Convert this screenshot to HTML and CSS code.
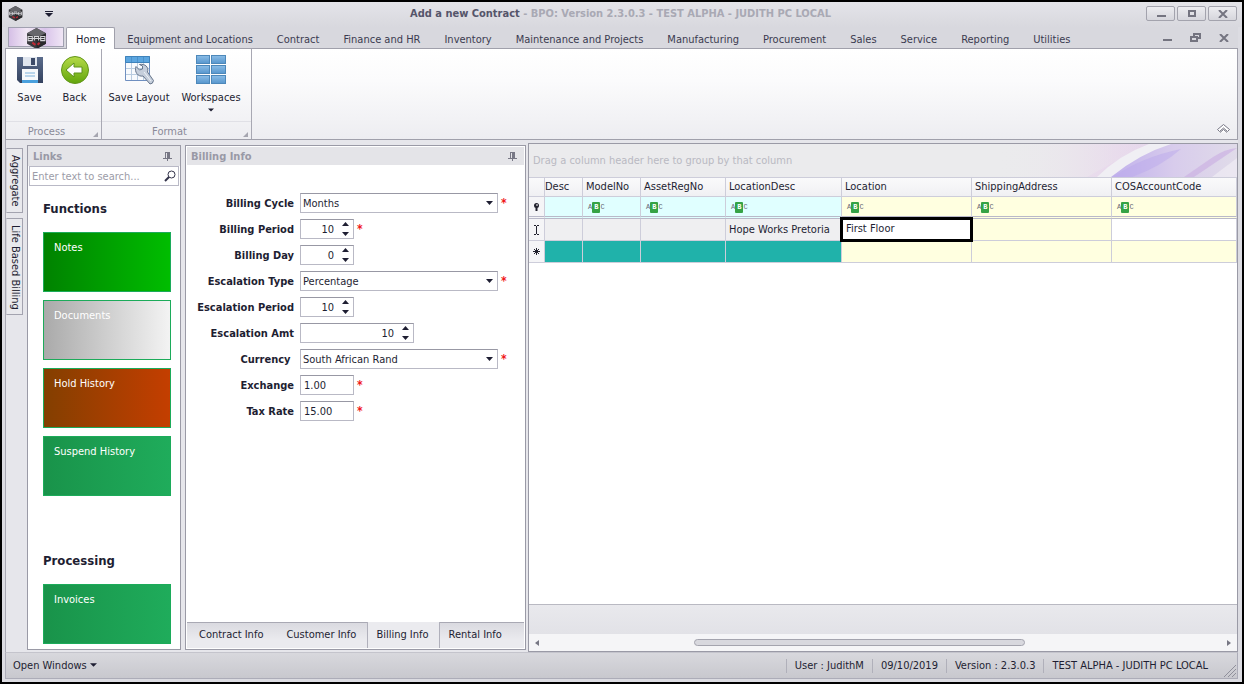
FILE: index.html
```html
<!DOCTYPE html>
<html lang="en">
<head>
    <meta charset="UTF-8">
    <meta name="viewport" content="width=device-width, initial-scale=1.0">
    <title>Add a new Contract - BPO</title>
    <link rel="stylesheet" href="styles.css">
</head>
<body>
    <!-- Shared icons -->
    <svg class="symbols" aria-hidden="true">
        <symbol id="icon-logo" viewBox="0 0 20 20">
            <path d="M10 0 L19 5 V15 L10 20 L1 15 V5 Z" fill="#3a3a3e"/>
            <path d="M10 0 L19 5 L10 9 L1 5 Z" fill="#66666b"/>
            <path d="M10 10 L19 5 V15 L10 20 Z" fill="#29292c"/>
            <path d="M2 8 H6 V12 H2 Z M8 12 V8 H12 V12 M14 8 H18 V12 H14 Z M2 10 H18" fill="none" stroke="#d4d4d8"/>
            <path d="M6 14 l3 2 M11 16 l2 -2" stroke="#c02a35" stroke-width="2"/>
        </symbol>
        <symbol id="icon-pin" viewBox="0 0 9 9">
            <path d="M2 0.5 H7 M2.5 0 V6 M0 6.5 H9 M4.5 7 V9" fill="none" stroke="#777785"/>
            <path d="M4 0 H7 V6 H4 Z" fill="#777785"/>
        </symbol>
        <symbol id="icon-down" viewBox="0 0 8 4">
            <path d="M0 0 H8 L4 4 Z" fill="#1e1e32"/>
        </symbol>
        <symbol id="icon-launcher" viewBox="0 0 5 5">
            <path d="M5 0 V5 H0 Z" fill="#a6a6b0"/>
        </symbol>
        <symbol id="icon-close" viewBox="0 0 10 8">
            <path d="M1 0 L9 8 M9 0 L1 8" fill="none" stroke="#747480" stroke-width="2"/>
        </symbol>
        <symbol id="icon-minimize" viewBox="0 0 10 8">
            <path d="M1 6 H10" stroke="#747480" stroke-width="2"/>
        </symbol>
    </svg>

    <header class="titlebar">
        <svg class="app-icon"><use href="#icon-logo"/></svg>
        <button class="quick-menu" aria-label="Customize toolbar">
            <svg width="8" height="6" viewBox="0 0 8 6"><path d="M0 0 H8 V1 H0 Z M0 2 H8 L4 6 Z" fill="#1e1e32"/></svg>
        </button>
        <h1 class="title">Add a new Contract <span>- BPO: Version 2.3.0.3 - TEST ALPHA - JUDITH PC LOCAL</span></h1>
        <div class="window-buttons">
            <button aria-label="Minimize"><svg width="10" height="8"><use href="#icon-minimize"/></svg></button>
            <button aria-label="Maximize"><svg width="10" height="8" viewBox="0 0 10 8"><path d="M2 1 H8 V6 H2 Z" fill="none" stroke="#747480" stroke-width="2"/></svg></button>
            <button aria-label="Close"><svg width="10" height="8"><use href="#icon-close"/></svg></button>
        </div>
    </header>

    <nav class="ribbon-tabs">
        <button class="app-button" aria-label="Application menu"><svg width="21" height="21"><use href="#icon-logo"/></svg></button>
        <a class="tab active" href="#">Home</a>
        <a class="tab" href="#">Equipment and Locations</a>
        <a class="tab" href="#">Contract</a>
        <a class="tab" href="#">Finance and HR</a>
        <a class="tab" href="#">Inventory</a>
        <a class="tab" href="#">Maintenance and Projects</a>
        <a class="tab" href="#">Manufacturing</a>
        <a class="tab" href="#">Procurement</a>
        <a class="tab" href="#">Sales</a>
        <a class="tab" href="#">Service</a>
        <a class="tab" href="#">Reporting</a>
        <a class="tab" href="#">Utilities</a>
        <div class="child-buttons">
            <button aria-label="Minimize document"><svg width="10" height="8"><use href="#icon-minimize"/></svg></button>
            <button aria-label="Restore document"><svg width="11" height="9" viewBox="0 0 11 9"><path d="M4 3 V1 H10 V5 H8" fill="none" stroke="#747480" stroke-width="2"/><path d="M1 4 H7 V8 H1 Z" fill="none" stroke="#747480" stroke-width="2"/></svg></button>
            <button aria-label="Close document"><svg width="10" height="8"><use href="#icon-close"/></svg></button>
        </div>
    </nav>

    <section class="ribbon">
        <div class="ribbon-group">
            <div class="ribbon-items">
                <button class="ribbon-button">
                    <svg width="28" height="30" viewBox="0 0 28 30">
                        <defs><linearGradient id="disk" x2="0" y2="1"><stop offset="0" stop-color="#5b6c8c"/><stop offset="1" stop-color="#34425f"/></linearGradient></defs>
                        <path d="M1 2 H27 V28 H4 L1 25 Z" fill="url(#disk)"/>
                        <path d="M7 2 H21 V11 H7 Z" fill="#dfe5ee"/>
                        <path d="M15 3 H19 V10 H15 Z" fill="#3c4a68"/>
                        <path d="M6 14 H22 V28 H6 Z" fill="#f7f9fc"/>
                        <path d="M6 25 H22 V28 H6 Z" fill="#4aa0dd"/>
                        <path d="M9 18 H19 M9 21 H19" stroke="#7db2dc"/>
                    </svg>
                    Save
                </button>
                <button class="ribbon-button">
                    <svg width="28" height="30" viewBox="0 0 28 30">
                        <defs><linearGradient id="ball" x2="0" y2="1"><stop offset="0" stop-color="#b5da48"/><stop offset="1" stop-color="#62a50c"/></linearGradient></defs>
                        <circle cx="14" cy="15" r="13.5" fill="url(#ball)" stroke="#62961a"/>
                        <path d="M5 15 L13 8 V12 H21 V18 H13 V22 Z" fill="#fff" stroke="#5d921b"/>
                    </svg>
                    Back
                </button>
            </div>
            <div class="group-label">Process<svg class="launcher"><use href="#icon-launcher"/></svg></div>
        </div>
        <div class="ribbon-group">
            <div class="ribbon-items">
                <button class="ribbon-button large">
                    <svg width="30" height="30" viewBox="0 0 30 30">
                        <path d="M1.5 1.5 H25.5 V25.5 H1.5 Z" fill="#f8fafd" stroke="#6f8fc0"/>
                        <path d="M1.5 1.5 H25.5 V7.5 H1.5 Z" fill="#5ba5df" stroke="#3f83bb"/>
                        <path d="M2 13.5 H25 M2 19.5 H25 M7.5 8 V25 M13.5 8 V25 M19.5 8 V25" stroke="#b9cce0"/>
                        <path d="M7.5 2 V7 M13.5 2 V7 M19.5 2 V7" stroke="#4a91cb"/>
                        <path d="M12 11.5 L15.5 15 L18.5 14 L18.5 11 L15.5 9.5 C21 8.5 25 12 23.5 17 L29.5 25.5 Q29 29 26 29 L19 21 C14 22 10 17 12 11.5 Z" fill="#c5cedb" stroke="#67758b"/>
                        <path d="M20 17 L27 26" stroke="#eef2f7"/>
                    </svg>
                    Save Layout
                </button>
                <button class="ribbon-button large">
                    <svg width="30" height="30" viewBox="0 0 30 30">
                        <defs><linearGradient id="pane" x2="0" y2="1"><stop offset="0" stop-color="#8bbde7"/><stop offset="1" stop-color="#5796cd"/></linearGradient></defs>
                        <g fill="url(#pane)" stroke="#4d88ba">
                            <rect x="0.5" y="0.5" width="13" height="8"/><rect x="15.5" y="0.5" width="14" height="8"/>
                            <rect x="0.5" y="10.5" width="13" height="8"/><rect x="15.5" y="10.5" width="14" height="8"/>
                            <rect x="0.5" y="20.5" width="13" height="8"/><rect x="15.5" y="20.5" width="14" height="8"/>
                        </g>
                    </svg>
                    Workspaces
                    <svg class="arrow" width="6" height="4"><use href="#icon-down"/></svg>
                </button>
            </div>
            <div class="group-label">Format<svg class="launcher"><use href="#icon-launcher"/></svg></div>
        </div>
        <button class="collapse" aria-label="Collapse ribbon">
            <svg width="13" height="10" viewBox="0 0 13 10"><path d="M0.5 5.5 L6.5 0.5 L12.5 5.5 L10.5 7.5 L6.5 4 L2.5 7.5 Z M3 8.5 L6.5 5.5 L10 8.5" fill="#fff" stroke="#777784"/></svg>
        </button>
    </section>

    <main class="workspace">
        <div class="side-tabs">
            <button>Aggregate</button>
            <button>Life Based Billing</button>
        </div>

        <aside class="panel links">
            <h2 class="panel-title">Links <svg width="9" height="9"><use href="#icon-pin"/></svg></h2>
            <div class="search">
                <input type="text" placeholder="Enter text to search..." aria-label="Search links">
                <button aria-label="Search"><svg width="12" height="12" viewBox="0 0 12 12"><circle cx="7.5" cy="4.5" r="3.5" fill="none" stroke="#33334a"/><path d="M5 7 L1 11" stroke="#33334a" stroke-width="2"/></svg></button>
            </div>
            <div class="link-list">
                <h3>Functions</h3>
                <button class="tile notes">Notes</button>
                <button class="tile documents">Documents</button>
                <button class="tile hold">Hold History</button>
                <button class="tile">Suspend History</button>
                <h3 class="processing">Processing</h3>
                <button class="tile">Invoices</button>
            </div>
        </aside>

        <section class="panel billing">
            <h2 class="panel-title">Billing Info <svg width="9" height="9"><use href="#icon-pin"/></svg></h2>
            <form class="billing-form">
                <label for="cycle">Billing Cycle</label>
                <div class="field required"><select id="cycle" class="wide"><option>Months</option></select></div>
                <label for="period">Billing Period</label>
                <div class="field required"><input id="period" class="small" type="number" value="10"></div>
                <label for="day">Billing Day</label>
                <div class="field"><input id="day" class="small" type="number" value="0"></div>
                <label for="esc-type">Escalation Type</label>
                <div class="field required"><select id="esc-type" class="wide"><option>Percentage</option></select></div>
                <label for="esc-period">Escalation Period</label>
                <div class="field"><input id="esc-period" class="small" type="number" value="10"></div>
                <label for="esc-amt">Escalation Amt</label>
                <div class="field"><input id="esc-amt" class="medium" type="number" value="10"></div>
                <label for="currency">Currency&nbsp;</label>
                <div class="field required"><select id="currency" class="wide"><option>South African Rand</option></select></div>
                <label for="exchange">Exchange</label>
                <div class="field required"><input id="exchange" class="small" type="text" value="1.00"></div>
                <label for="tax">Tax Rate</label>
                <div class="field required"><input id="tax" class="small" type="text" value="15.00"></div>
            </form>
            <div class="bottom-tabs">
                <button>Contract Info</button>
                <button>Customer Info</button>
                <button class="active">Billing Info</button>
                <button class="last">Rental Info</button>
            </div>
        </section>

        <section class="grid">
            <div class="group-panel">
                <span>Drag a column header here to group by that column</span>
                <svg width="240" height="33" viewBox="0 0 240 33">
                    <defs>
                        <linearGradient id="haze"><stop offset="0" stop-color="#ebebed"/><stop offset="0.5" stop-color="#e8d8ec"/><stop offset="1" stop-color="#e0d6ea"/></linearGradient>
                        <linearGradient id="veil"><stop offset="0" stop-color="#ebebed"/><stop offset="1" stop-color="#ebebed" stop-opacity="0"/></linearGradient>
                        <linearGradient id="petal"><stop offset="0" stop-color="#c0b0ec"/><stop offset="0.5" stop-color="#d8ccec"/><stop offset="1" stop-color="#e0dbe9"/></linearGradient>
                    </defs>
                    <rect width="240" height="33" fill="url(#haze)"/>
                    <path d="M0 0 H150 L90 33 H0 Z" fill="url(#veil)"/>
                    <path d="M152 0 H176 Q146 11 121 33 H100 Q122 11 152 0 Z" fill="#f0eff4"/>
                    <path d="M174 0 H240 V33 H114 Q142 10 174 0 Z" fill="url(#petal)"/>
                    <path d="M116 33 Q145 13 184 5 Q165 22 135 33 Z" fill="#bba9eb" opacity="0.5"/>
                    <path d="M187 33 L216 13 Q228 5 240 4 L197 33 Z" fill="#ccb2e3" opacity="0.7"/>
                    <path d="M215 33 L240 14 V33 Z" fill="#efedf4" opacity="0.7"/>
                </svg>
            </div>
            <table>
                <colgroup>
                    <col class="c-indicator"><col class="c-desc"><col class="c-model"><col class="c-asset"><col class="c-locdesc"><col class="c-location"><col class="c-shipping"><col>
                </colgroup>
                <thead>
                    <tr>
                        <th></th>
                        <th class="cut">Desc</th>
                        <th>ModelNo</th>
                        <th>AssetRegNo</th>
                        <th>LocationDesc</th>
                        <th>Location</th>
                        <th>ShippingAddress</th>
                        <th>COSAccountCode</th>
                    </tr>
                </thead>
                <tbody>
                    <tr class="filter-row">
                        <td class="indicator"><svg width="7" height="8" viewBox="0 0 7 8"><circle cx="3.5" cy="2.5" r="2.5" fill="#22222e"/><path d="M3.5 4 V8" stroke="#22222e" stroke-width="2"/><path d="M3 2 H5" stroke="#fff"/></svg></td>
                        <td class="cyan"></td>
                        <td class="cyan"><span class="abc">A<b>B</b>C</span></td>
                        <td class="cyan"><span class="abc">A<b>B</b>C</span></td>
                        <td class="cyan"><span class="abc">A<b>B</b>C</span></td>
                        <td class="yellow"><span class="abc">A<b>B</b>C</span></td>
                        <td class="yellow"><span class="abc">A<b>B</b>C</span></td>
                        <td class="yellow"><span class="abc">A<b>B</b>C</span></td>
                    </tr>
                    <tr>
                        <td class="indicator"><svg width="7" height="10" viewBox="0 0 7 10"><path d="M1 0.5 H3 M4 0.5 H6 M3.5 1 V9 M1 9.5 H3 M4 9.5 H6" fill="none" stroke="#22222e"/></svg></td>
                        <td class="gray"></td>
                        <td class="gray"></td>
                        <td class="gray"></td>
                        <td class="gray">Hope Works Pretoria</td>
                        <td class="editing"><input type="text" value="First Floor" aria-label="Location"></td>
                        <td class="yellow"></td>
                        <td></td>
                    </tr>
                    <tr>
                        <td class="indicator"><svg width="7" height="7" viewBox="0 0 7 7"><path d="M3.5 0 V7 M0 3.5 H7 M1 1 L6 6 M6 1 L1 6" stroke="#22222e"/></svg></td>
                        <td class="teal"></td>
                        <td class="teal"></td>
                        <td class="teal"></td>
                        <td class="teal"></td>
                        <td class="yellow"></td>
                        <td class="yellow"></td>
                        <td class="yellow"></td>
                    </tr>
                </tbody>
            </table>
            <div class="grid-space"></div>
            <div class="grid-footer"></div>
            <div class="scrollbar">
                <svg width="4" height="6" viewBox="0 0 4 6"><path d="M4 0 V6 L0 3 Z" fill="#777784"/></svg>
                <div class="track"><div class="thumb"></div></div>
                <svg width="4" height="6" viewBox="0 0 4 6"><path d="M0 0 V6 L4 3 Z" fill="#777784"/></svg>
            </div>
        </section>
    </main>

    <footer class="statusbar">
        <button class="open-windows">Open Windows <svg width="7" height="4"><use href="#icon-down"/></svg></button>
        <span class="status">User : JudithM</span>
        <span class="status">09/10/2019</span>
        <span class="status">Version : 2.3.0.3</span>
        <span class="status">TEST ALPHA - JUDITH PC LOCAL</span>
        <svg class="grip" width="12" height="12" viewBox="0 0 12 12"><path d="M0 12 L12 0 M4 12 L12 4 M8 12 L12 8" stroke="#8f8f9b"/></svg>
    </footer>
</body>
</html>
```
FILE: styles.css
```css
* {
    box-sizing: border-box;
}
body {
    margin: 0;
    height: 100vh;
    display: flex;
    flex-direction: column;
    border: 2px solid #000;
    padding: 0 4px 3px 3px;
    background: #dcdce2;
    color: #1e1e32;
    font-family: "DejaVu Sans Condensed", "DejaVu Sans", sans-serif;
    font-size: 11px;
    line-height: 14px;
    overflow: hidden;
}
button, input, select {
    font: inherit;
    color: inherit;
}
button {
    border: none;
    background: none;
    padding: 0;
}
svg {
    flex: none;
}
.symbols {
    position: absolute;
    width: 0;
    height: 0;
}

/* Title bar */
.titlebar {
    display: flex;
    align-items: center;
    height: 25px;
    margin: 0 -4px 0 -3px;
    padding: 0 5px 2px 6px;
    background: linear-gradient(#e4e4e9, #d8d8de);
}
.app-icon {
    width: 15px;
    height: 15px;
}
.quick-menu {
    display: flex;
    padding: 0 22px;
}
.title {
    flex: 1;
    margin: 0;
    padding: 1px 0 0 20px;
    text-align: center;
    font-size: 11px;
    color: #55556a;
}
.title span {
    color: #a9a9b4;
}
.window-buttons {
    display: flex;
    gap: 2px;
}
.window-buttons button {
    display: flex;
    align-items: center;
    justify-content: center;
    width: 29px;
    height: 15px;
    border: 1px solid #a3a3ad;
    border-radius: 2px;
    background: linear-gradient(#ececf0, #d6d6dc);
}

/* Ribbon */
.ribbon-tabs {
    display: flex;
    height: 21px;
    padding: 0 9px 0 3px;
    background: #d8d8de;
}
.app-button {
    width: 56px;
    height: 20px;
    margin-right: 2px;
    border: 1px solid #a0a0b0;
    background: linear-gradient(90deg, #d5bfe6, #f2e8f6, #d9c4ea, #f0e6f5);
}
.app-button svg {
    display: block;
    margin: 0 auto;
}
.tab {
    padding: 6px 12px 0;
    color: #3b3b50;
    text-decoration: none;
    white-space: nowrap;
}
.tab.active {
    margin-bottom: -1px;
    padding: 5px 9px 0;
    border: 1px solid #a0a0ab;
    border-bottom: none;
    border-radius: 2px 2px 0 0;
    background: #fff;
    color: #1e1e32;
    z-index: 1;
}
.child-buttons {
    display: flex;
    align-items: center;
    gap: 18px;
    margin-left: auto;
}
.child-buttons button {
    display: flex;
}
.ribbon {
    display: flex;
    height: 92px;
    border: 1px solid #a0a0ab;
    background: linear-gradient(#fff, #fbfbfc 35%, #ededf1);
}
.ribbon-group {
    display: flex;
    flex-direction: column;
    border-right: 1px solid #a8a8b3;
}
.ribbon-items {
    flex: 1;
    display: flex;
    padding: 6px 4px 0 1px;
}
.ribbon-button {
    display: flex;
    flex-direction: column;
    align-items: center;
    gap: 6px;
    min-width: 45px;
    white-space: nowrap;
}
.ribbon-button.large {
    width: 72px;
}
.ribbon-button .arrow {
    margin-top: -3px;
}
.group-label {
    position: relative;
    display: flex;
    align-items: center;
    justify-content: center;
    height: 18px;
    padding: 2px 14px 0 0;
    border-top: 1px solid #e0e0e6;
    color: #8a8a98;
}
.launcher {
    position: absolute;
    right: 3px;
    bottom: 2px;
    width: 5px;
    height: 5px;
}
.collapse {
    align-self: flex-end;
    margin: 0 7px 5px auto;
}
.collapse svg {
    display: block;
}

/* Workspace */
.workspace {
    flex: 1;
    min-height: 0;
    display: flex;
    padding-top: 3px;
    border-left: 1px solid #a8a8b3;
    background: #e6e6eb;
}
.side-tabs {
    display: flex;
    flex-direction: column;
    gap: 5px;
    width: 21px;
    padding-top: 5px;
}
.side-tabs button {
    align-self: flex-start;
    width: 17px;
    padding: 6px 0 5px;
    border: 1px solid #a3a3af;
    border-left-color: #d3d3da;
    background: #e9e9ed;
    writing-mode: vertical-rl;
    white-space: nowrap;
}
.panel {
    display: flex;
    flex-direction: column;
    margin: 2px 0;
    border: 1px solid #9a9aa6;
    background: #fff;
}
.links {
    width: 154px;
    margin-right: 4px;
}
.billing {
    width: 341px;
    margin-right: 2px;
    padding: 1px;
}
.panel-title {
    display: flex;
    align-items: center;
    justify-content: space-between;
    height: 20px;
    margin: 0;
    padding: 1px 8px 0 5px;
    background: #e4e4e8;
    font-size: 11px;
    color: #9999a6;
}
.billing .panel-title {
    height: 18px;
    padding: 1px 7px 0 4px;
}
.search {
    display: flex;
    align-items: center;
    height: 20px;
    margin: 0 1px;
    padding-right: 2px;
    border: 1px solid #b9b9c6;
}
.search input {
    flex: 1;
    min-width: 0;
    padding: 1px 2px 0;
    border: none;
    outline: none;
    background: none;
}
.search input::placeholder {
    color: #9c9ca8;
}
.search button {
    display: flex;
}
.link-list {
    flex: 1;
    min-height: 0;
    display: flex;
    flex-direction: column;
    gap: 8px;
    padding: 15px 9px 0 15px;
    overflow: hidden;
}
.link-list h3 {
    margin: 0 0 7px;
    font-size: 13px;
    line-height: 16px;
}
.link-list .processing {
    margin-top: 49px;
}
.tile {
    display: flex;
    flex: none;
    height: 60px;
    padding: 8px 10px;
    border: 1px solid #1cab5a;
    background: linear-gradient(90deg, #19934a, #1fac5b);
    color: #fff;
}
.notes {
    background: linear-gradient(90deg, #008200, #00bd00);
}
.documents {
    background: linear-gradient(90deg, #aaa, #f3f3f3);
}
.hold {
    background: linear-gradient(90deg, #833f00, #c43e00);
}

/* Billing form */
.billing-form {
    flex: 1;
    display: grid;
    grid-template-columns: 107px 1fr;
    align-content: start;
    align-items: center;
    gap: 6px;
    padding-top: 28px;
}
.billing-form label {
    padding-top: 2px;
    text-align: right;
    font-weight: bold;
    white-space: nowrap;
}
.field {
    display: flex;
}
.required::after {
    content: "*";
    margin-left: 3px;
    color: #f01818;
    font-size: 12px;
    font-weight: bold;
    line-height: 20px;
}
.field input, .field select {
    height: 20px;
    padding: 1px 3px 0;
    border: 1px solid #b9b9c5;
    border-top-color: #9898a4;
    border-radius: 0;
    background-color: #fff;
    appearance: none;
}
.field select {
    padding: 1px 2px 0;
    background: #fff url("data:image/svg+xml,%3Csvg xmlns='http://www.w3.org/2000/svg' width='7' height='4'%3E%3Cpath d='M0 0H7L3.5 4Z' fill='%231e1e32'/%3E%3C/svg%3E") no-repeat right 4px center;
}
.field input[type="number"] {
    padding-right: 19px;
    text-align: right;
    background: #fff url("data:image/svg+xml,%3Csvg xmlns='http://www.w3.org/2000/svg' width='7' height='14'%3E%3Cpath d='M0 4H7L3.5 0ZM0 10H7L3.5 14Z' fill='%231e1e32'/%3E%3C/svg%3E") no-repeat right 4px center;
    appearance: textfield;
}
.field input::-webkit-inner-spin-button {
    display: none;
}
.wide {
    width: 198px;
}
.medium {
    width: 114px;
}
.small {
    width: 54px;
}
.bottom-tabs {
    display: flex;
    height: 26px;
    background: #ebebef;
}
.bottom-tabs button {
    padding: 0 11px 2px 12px;
    border-top: 1px solid #a9a9b4;
    background: linear-gradient(#dadae0, #ebebef 70%);
    white-space: nowrap;
}
.bottom-tabs .active {
    padding: 0 10px 1px 8px;
    border: 1px solid #b0b0bb;
    border-width: 0 1px;
    background: #ebebef;
}
.bottom-tabs .last {
    flex: 1;
    padding-left: 9px;
    text-align: left;
}

/* Data grid */
.grid {
    flex: 1;
    min-width: 0;
    display: flex;
    flex-direction: column;
    border: 1px solid #9a9aa6;
    background: #fff;
    overflow: hidden;
}
.group-panel {
    display: flex;
    align-items: center;
    justify-content: space-between;
    height: 33px;
    padding-left: 4px;
    background: #ebebed;
    color: #b9b9c2;
    white-space: nowrap;
}
table {
    width: 100%;
    table-layout: fixed;
    border-collapse: separate;
    border-spacing: 0;
}
.c-indicator {
    width: 16px;
}
.c-desc {
    width: 38px;
}
.c-model {
    width: 58px;
}
.c-asset {
    width: 85px;
}
.c-locdesc {
    width: 116px;
}
.c-location {
    width: 130px;
}
.c-shipping {
    width: 140px;
}
th, td {
    height: 21px;
    padding: 0 3px;
    border-right: 1px solid #cdcdda;
    border-bottom: 1px solid #cdcdda;
    text-align: left;
    font-weight: normal;
    white-space: nowrap;
}
td {
    height: 22px;
    padding-top: 1px;
}
th {
    height: 20px;
    background: linear-gradient(#fafafb, #f0f0f3);
    border-top: 1px solid #cdcdda;
}
.cut {
    padding-left: 0;
}
.filter-row td {
    height: 22px;
    border-bottom: 3px double #b9b9c8;
}
.indicator {
    padding: 0;
    background: #f5f5f7;
    text-align: center;
}
.indicator svg {
    display: block;
    margin: 0 auto;
}
.cyan {
    background: #e0ffff;
}
.yellow {
    background: #ffffe0;
}
.gray {
    background: #efeff1;
}
.teal {
    background: #20b2aa;
}
.editing {
    padding: 0;
}
.editing input {
    display: block;
    position: relative;
    width: 100%;
    height: 21px;
    padding: 0 4px 2px;
    border: none;
    outline: 3px solid #000;
    outline-offset: -1px;
}
.abc {
    display: flex;
    align-items: center;
    padding-left: 2px;
    font-family: "Liberation Mono", monospace;
    font-size: 7px;
    line-height: 11px;
    color: #666674;
}
.abc b {
    padding: 0 2px;
    border-radius: 1px;
    background: #35a345;
    color: #fff;
}
.grid-space {
    flex: 1;
}
.grid-footer {
    height: 30px;
    border-top: 1px solid #b9b9c2;
    background: linear-gradient(#e9e9ed, #e2e2e7);
}
.scrollbar {
    display: flex;
    align-items: center;
    gap: 6px;
    height: 17px;
    padding: 0 6px;
    background: #f5f5f7;
}
.track {
    flex: 1;
}
.thumb {
    width: 49%;
    height: 7px;
    margin-left: 22%;
    border: 1px solid #a4a4ae;
    border-radius: 4px;
    background: #d8d8de;
}

/* Status bar */
.statusbar {
    display: flex;
    align-items: center;
    height: 27px;
    padding-top: 1px;
    border: 1px solid #acacb8;
    border-top-color: #c4c4cc;
    background: linear-gradient(#d8d8dd, #c8c8ce);
    white-space: nowrap;
}
.open-windows {
    margin-right: auto;
    padding-left: 7px;
}
.open-windows svg {
    margin-bottom: 2px;
}
.status {
    padding: 0 8px;
    border-left: 1px solid #b0b0ba;
}
.grip {
    align-self: flex-end;
    margin: 0 1px 1px 8px;
}
```
